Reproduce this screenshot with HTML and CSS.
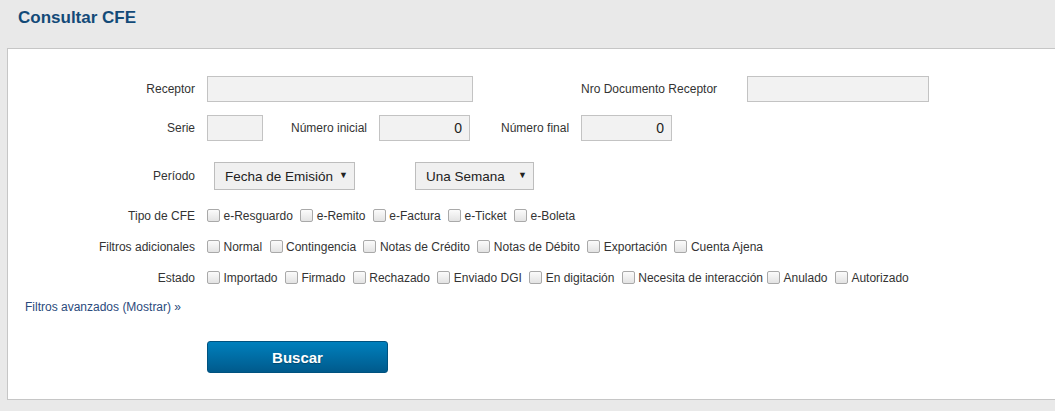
FILE: index.html
```html
<!DOCTYPE html>
<html lang="es">
<head>
<meta charset="utf-8">
<title>Consultar CFE</title>
<link rel="stylesheet" href="styles.css">
</head>
<body>
<div class="header"><h1 class="title">Consultar CFE</h1></div>
<div class="panel">
  <div class="row row-first">
    <span class="lbl">Receptor</span>
    <input class="inp w-receptor" type="text">
    <span class="lbl-in ml-nro">Nro Documento Receptor</span>
    <input class="inp w-nro ml-nro-inp" type="text">
  </div>
  <div class="row row-second">
    <span class="lbl">Serie</span>
    <input class="inp w-serie" type="text">
    <span class="lbl-in ml-ini">Número inicial</span>
    <input class="inp num w-num" type="text" value="0">
    <span class="lbl-in ml-fin">Número final</span>
    <input class="inp num w-num" type="text" value="0">
  </div>
  <div class="row row-third">
    <span class="lbl">Período</span>
    <span class="sel sel-fecha"><select><option>Fecha de Emisión</option></select></span>
    <span class="sel sel-semana"><select><option>Una Semana</option></select></span>
  </div>
  <div class="row row-chk row-chk-first">
    <span class="lbl">Tipo de CFE</span>
    <div class="checks">
      <label class="chk"><input type="checkbox">e-Resguardo</label>
      <label class="chk"><input type="checkbox">e-Remito</label>
      <label class="chk"><input type="checkbox">e-Factura</label>
      <label class="chk"><input type="checkbox">e-Ticket</label>
      <label class="chk"><input type="checkbox">e-Boleta</label>
    </div>
  </div>
  <div class="row row-chk">
    <span class="lbl">Filtros adicionales</span>
    <div class="checks">
      <label class="chk"><input type="checkbox">Normal</label>
      <label class="chk"><input type="checkbox">Contingencia</label>
      <label class="chk"><input type="checkbox">Notas de Crédito</label>
      <label class="chk"><input type="checkbox">Notas de Débito</label>
      <label class="chk"><input type="checkbox">Exportación</label>
      <label class="chk"><input type="checkbox">Cuenta Ajena</label>
    </div>
  </div>
  <div class="row row-chk">
    <span class="lbl">Estado</span>
    <div class="checks">
      <label class="chk"><input type="checkbox">Importado</label>
      <label class="chk"><input type="checkbox">Firmado</label>
      <label class="chk"><input type="checkbox">Rechazado</label>
      <label class="chk"><input type="checkbox">Enviado DGI</label>
      <label class="chk"><input type="checkbox">En digitación</label>
      <label class="chk"><input type="checkbox">Necesita de interacción</label><label class="chk"><input type="checkbox">Anulado</label>
      <label class="chk"><input type="checkbox">Autorizado</label>
    </div>
  </div>
  <div class="row-link">
    <a class="adv" href="#">Filtros avanzados (Mostrar) »</a>
  </div>
  <div class="row-btn">
    <button class="btn" type="button">Buscar</button>
  </div>
</div>
</body>
</html>
```
FILE: styles.css
```css
html, body {
  margin: 0;
  padding: 0;
}
body {
  background: #e9e9e9;
  font-family: "Liberation Sans", Arial, sans-serif;
  font-size: 12px;
  color: #333;
  overflow: hidden;
}
.header {
  height: 48px;
  box-sizing: border-box;
  padding: 8px 0 0 18px;
}
.title {
  margin: 0;
  font-size: 17px;
  line-height: 20px;
  font-weight: bold;
  color: #134a78;
}
.panel {
  margin-left: 7px;
  background: #fff;
  border: 1px solid #c6c6c6;
  border-right: 0;
  padding: 27px 0 26px 0;
}
.row {
  display: flex;
  align-items: center;
}
.row-first { height: 26px; }
.row-second { height: 26px; margin-top: 13px; }
.row-third { height: 28px; margin-top: 21px; }
.row-chk { height: 18px; margin-top: 13px; }
.row-chk-first { margin-top: 17px; }
.lbl {
  width: 187px;
  flex: none;
  text-align: right;
  white-space: nowrap;
}
.lbl-in { white-space: nowrap; }
.inp {
  box-sizing: border-box;
  height: 26px;
  margin: 0 0 0 12px;
  padding: 0 7px;
  border: 1px solid #c3c3c3;
  background: #f2f2f2;
  font-family: "Liberation Sans", Arial, sans-serif;
  font-size: 14px;
  color: #222;
  outline: none;
}
.num { text-align: right; }
.w-receptor { width: 266px; }
.w-nro { width: 182px; }
.ml-nro { margin-left: 108px; }
.ml-nro-inp { margin-left: 30px; }
.w-serie { width: 56px; }
.w-num { width: 91px; }
.ml-ini { margin-left: 28px; }
.ml-fin { margin-left: 31px; }
.sel {
  position: relative;
  display: block;
  height: 28px;
}
.sel select {
  appearance: none;
  -webkit-appearance: none;
  box-sizing: border-box;
  height: 28px;
  width: 100%;
  margin: 0;
  padding: 0 0 0 10px;
  border: 1px solid #bdbdbd;
  border-radius: 0;
  background: #f0f0f0;
  font-family: "Liberation Sans", Arial, sans-serif;
  font-size: 13.5px;
  color: #222;
}
.sel::after {
  content: "\25BC";
  position: absolute;
  right: 7px;
  top: 8px;
  font-size: 9px;
  line-height: 10px;
  color: #222;
  pointer-events: none;
}
.sel-fecha { width: 141px; margin-left: 19px; }
.sel-semana { width: 119px; margin-left: 60px; }
.checks {
  margin-left: 8px;
  white-space: nowrap;
  line-height: 18px;
}
.chk input {
  appearance: none;
  -webkit-appearance: none;
  box-sizing: border-box;
  width: 13px;
  height: 13px;
  margin: 0 3.5px 0 4px;
  vertical-align: -2px;
  border: 1px solid #a9a9a9;
  border-radius: 2px;
  background: linear-gradient(#fbfbfb, #e3e3e3);
}
.row-link {
  margin: 11px 0 0 17px;
  height: 18px;
  line-height: 18px;
}
.adv {
  color: #2b4a7c;
  text-decoration: none;
  font-size: 12px;
}
.row-btn {
  margin: 25px 0 0 199px;
}
.btn {
  box-sizing: border-box;
  display: block;
  width: 181px;
  height: 32px;
  margin: 0;
  border: 1px solid #00527f;
  border-radius: 3px;
  background: linear-gradient(#0080bd, #005a8c);
  color: #fff;
  font-family: "Liberation Sans", Arial, sans-serif;
  font-size: 15px;
  font-weight: bold;
  text-shadow: 0 1px 1px rgba(0, 0, 0, 0.3);
}
```
